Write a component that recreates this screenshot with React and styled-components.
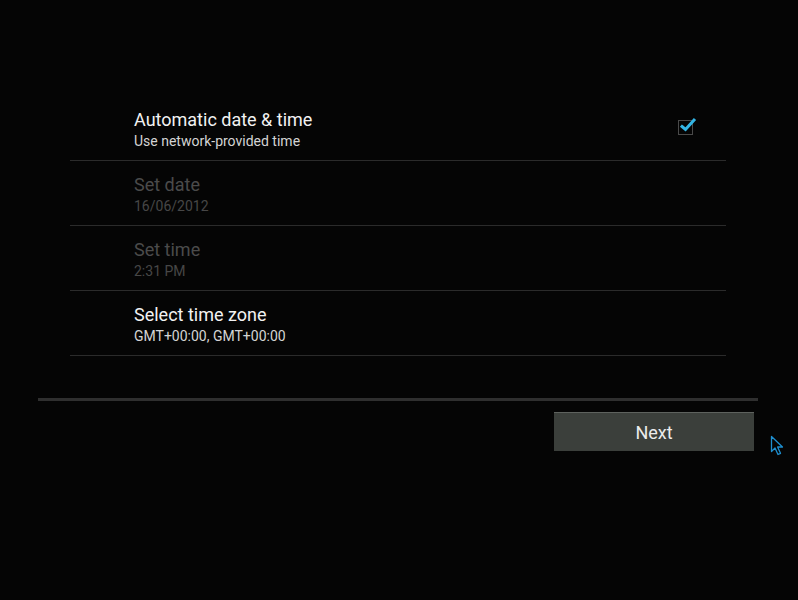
import React from "react";
import styled, { createGlobalStyle } from "styled-components";

const GlobalStyle = createGlobalStyle`
  html, body {
    margin: 0;
    padding: 0;
    background: #050505;
  }
  body {
    font-family: Roboto, "Liberation Sans", sans-serif;
  }
`;

const Screen = styled.div`
  position: relative;
  width: 798px;
  height: 600px;
  background: #050505;
  display: flex;
  flex-direction: column;
  overflow: hidden;
`;

const List = styled.div`
  margin: 96px 0 0 70px;
  width: 656px;
  display: flex;
  flex-direction: column;
`;

const Row = styled.div`
  height: 64px;
  border-bottom: 1px solid #2b2b2b;
  display: flex;
  align-items: center;
  justify-content: space-between;
  padding: 0 33px 0 64px;
`;

const Texts = styled.div`
  display: flex;
  flex-direction: column;
  gap: 3px;
  margin-top: 2px;
`;

const Title = styled.div`
  font-size: 18px;
  line-height: 21px;
  color: ${(p) => (p.$disabled ? "#4b4b4b" : "#f2f2f2")};
`;

const Summary = styled.div`
  font-size: 14px;
  line-height: 17px;
  color: ${(p) => (p.$disabled ? "#474747" : "#d4d4d4")};
`;

const Check = styled.div`
  position: relative;
  width: 13px;
  height: 13px;
  border: 1px solid #4a4a4a;
  margin-top: -2px;

  svg {
    position: absolute;
    left: 0;
    top: -4px;
  }
`;

const Footer = styled.div`
  margin: 42px 0 0 38px;
  width: 720px;
  display: flex;
  flex-direction: column;
  align-items: flex-end;
`;

const Bar = styled.div`
  align-self: stretch;
  height: 3px;
  background: #2f2f2f;
`;

const NextButton = styled.button`
  margin: 11px 4px 0 0;
  width: 200px;
  height: 39px;
  border: none;
  border-top: 1px solid #5e625e;
  background: #3b3f3b;
  color: #ececec;
  font-family: Roboto, "Liberation Sans", sans-serif;
  font-size: 18px;
  padding: 0;
`;

const Cursor = styled.svg`
  position: absolute;
  left: 770px;
  top: 435px;
`;

const rows = [
  { title: "Automatic date & time", summary: "Use network-provided time", checked: true },
  { title: "Set date", summary: "16/06/2012", disabled: true },
  { title: "Set time", summary: "2:31 PM", disabled: true },
  { title: "Select time zone", summary: "GMT+00:00, GMT+00:00" },
];

export default function App() {
  return (
    <Screen>
      <GlobalStyle />
      <List>
        {rows.map((r) => (
          <Row key={r.title}>
            <Texts>
              <Title $disabled={r.disabled}>{r.title}</Title>
              <Summary $disabled={r.disabled}>{r.summary}</Summary>
            </Texts>
            {r.checked && (
              <Check>
                <svg width="18" height="16" viewBox="0 0 18 16">
                  <path
                    d="M3 9.5 L6.5 12.5 L15 3"
                    fill="none"
                    stroke="#33b5e5"
                    strokeWidth="3"
                    strokeLinecap="square"
                  />
                </svg>
              </Check>
            )}
          </Row>
        ))}
      </List>
      <Footer>
        <Bar />
        <NextButton>Next</NextButton>
      </Footer>
      <Cursor width="16" height="22" viewBox="0 0 16 22">
        <path
          d="M1.5 1.5 L1.5 16.5 L5 13 L8 19.5 L10.5 18.3 L7.6 12 L12.5 12 Z"
          fill="#050505"
          stroke="#1e8fd0"
          strokeWidth="1.3"
          strokeLinejoin="round"
        />
      </Cursor>
    </Screen>
  );
}
